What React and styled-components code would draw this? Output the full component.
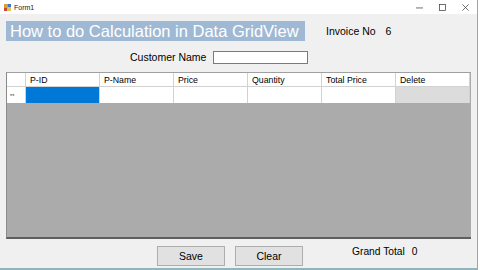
import React from "react";
import styled, { createGlobalStyle } from "styled-components";

const Global = createGlobalStyle`
  html, body { margin: 0; padding: 0; background: #ffffff; }
  body { font-family: "Liberation Sans", Arial, sans-serif; }
`;

const columns = ["P-ID", "P-Name", "Price", "Quantity", "Total Price", "Delete"];

export default function App() {
  return (
    <>
      <Global />
      <Window>
        <TitleBar>
          <FormIcon viewBox="0 0 8 8">
            <rect x="0" y="0" width="4" height="4" fill="#d9a23a" />
            <rect x="4" y="0" width="4" height="4" fill="#3a78c9" />
            <rect x="0" y="4" width="4" height="4" fill="#c94a3a" />
            <rect x="4" y="4" width="4" height="4" fill="#e3c25a" />
          </FormIcon>
          <Caption>Form1</Caption>
          <Controls>
            <CtrlBtn>
              <svg viewBox="0 0 8 8">
                <line x1="0" y1="4.5" x2="8" y2="4.5" stroke="#333" strokeWidth="0.8" />
              </svg>
            </CtrlBtn>
            <CtrlBtn>
              <svg viewBox="0 0 8 8">
                <rect x="0.5" y="0.5" width="7" height="7" fill="none" stroke="#333" strokeWidth="0.8" />
              </svg>
            </CtrlBtn>
            <CtrlBtn>
              <svg viewBox="0 0 8 8">
                <line x1="0.5" y1="0.5" x2="7.5" y2="7.5" stroke="#333" strokeWidth="0.8" />
                <line x1="7.5" y1="0.5" x2="0.5" y2="7.5" stroke="#333" strokeWidth="0.8" />
              </svg>
            </CtrlBtn>
          </Controls>
        </TitleBar>
        <Body>
          <HeadRow>
            <HeadLabel>How to do Calculation in Data GridView</HeadLabel>
            <Label $left={21}>Invoice No</Label>
            <Label $left={10}>6</Label>
          </HeadRow>
          <CustomerRow>
            <Label>Customer Name</Label>
            <TextBox />
          </CustomerRow>
          <Grid>
            <GridRows>
              <HeaderCell $corner />
              {columns.map((c) => (
                <HeaderCell key={c}>{c}</HeaderCell>
              ))}
              <RowHeader>**</RowHeader>
              {columns.map((c, i) => (
                <DataCell key={c} $selected={i === 0} $button={i === 5} />
              ))}
            </GridRows>
          </Grid>
          <BottomRow>
            <Button $left={151}>Save</Button>
            <Button $left={10}>Clear</Button>
            <TotalLabel>Grand Total</TotalLabel>
            <TotalLabel $left={7}>0</TotalLabel>
          </BottomRow>
        </Body>
      </Window>
    </>
  );
}

const Window = styled.div`
  width: 477px;
  height: 268px;
  background: #f0f0f0;
  border-right: 1px solid #a3a3a3;
  border-bottom: 2px solid #8fb6bf;
  display: flex;
  flex-direction: column;
  overflow: hidden;
`;

const TitleBar = styled.div`
  height: 14px;
  background: #ffffff;
  display: flex;
  align-items: center;
  padding-left: 4px;
`;

const FormIcon = styled.svg`
  width: 7px;
  height: 7px;
`;

const Caption = styled.span`
  font-size: 7px;
  color: #222;
  margin-left: 3px;
`;

const Controls = styled.div`
  margin-left: auto;
  display: flex;
  align-items: center;
`;

const CtrlBtn = styled.div`
  width: 23px;
  height: 14px;
  display: flex;
  align-items: center;
  justify-content: center;
  svg {
    width: 7px;
    height: 7px;
  }
`;

const Body = styled.div`
  padding-left: 6px;
  display: flex;
  flex-direction: column;
`;

const HeadRow = styled.div`
  display: flex;
  align-items: center;
  margin-top: 7px;
  height: 20px;
`;

const HeadLabel = styled.div`
  width: 299px;
  height: 20px;
  background: #9fb9d4;
  color: #ffffff;
  font-size: 16.5px;
  line-height: 20px;
  padding-left: 4px;
  box-sizing: border-box;
  white-space: nowrap;
`;

const Label = styled.span`
  font-size: 10.5px;
  color: #000;
  margin-left: ${(p) => p.$left || 0}px;
  white-space: nowrap;
`;

const CustomerRow = styled.div`
  display: flex;
  align-items: center;
  margin-top: 10px;
  height: 12px;
  padding-left: 124px;
`;

const TextBox = styled.div`
  width: 93px;
  height: 11px;
  margin-left: 7px;
  background: #ffffff;
  border: 1px solid #7a7a7a;
`;

const Grid = styled.div`
  margin-top: 9px;
  width: 465px;
  height: 167px;
  box-sizing: border-box;
  background: #ababab;
  border-top: 1px solid #a0a0a0;
  border-left: 1px solid #8a8a8a;
  border-bottom: 2px solid #5f5f5f;
`;

const GridRows = styled.div`
  display: grid;
  grid-template-columns: 19px repeat(6, 74px);
  grid-template-rows: 14px 16px;
`;

const HeaderCell = styled.div`
  background: #ffffff;
  border-right: 1px solid #d2d2d2;
  border-bottom: 1px solid #d2d2d2;
  font-size: 8.75px;
  color: #000;
  padding-left: ${(p) => (p.$corner ? 0 : 4)}px;
  display: flex;
  align-items: center;
  box-sizing: border-box;
`;

const RowHeader = styled.div`
  background: #ffffff;
  border-right: 1px solid #d2d2d2;
  font-size: 5.5px;
  color: #333;
  padding-left: 3px;
  padding-top: 2px;
  display: flex;
  align-items: center;
  box-sizing: border-box;
`;

const DataCell = styled.div`
  background: ${(p) => (p.$selected ? "#0078d7" : p.$button ? "#dcdcdc" : "#ffffff")};
  border-right: 1px solid #d2d2d2;
  box-sizing: border-box;
`;

const BottomRow = styled.div`
  display: flex;
  align-items: flex-start;
  margin-top: 7px;
  height: 20px;
`;

const Button = styled.div`
  width: 68px;
  height: 20px;
  margin-left: ${(p) => p.$left || 0}px;
  background: #e1e1e1;
  border: 1px solid #adadad;
  box-sizing: border-box;
  font-size: 10.5px;
  color: #000;
  display: flex;
  align-items: center;
  justify-content: center;
`;

const TotalLabel = styled.span`
  font-size: 10.25px;
  color: #000;
  margin-left: ${(p) => p.$left || 49}px;
  line-height: 12px;
  white-space: nowrap;
`;
